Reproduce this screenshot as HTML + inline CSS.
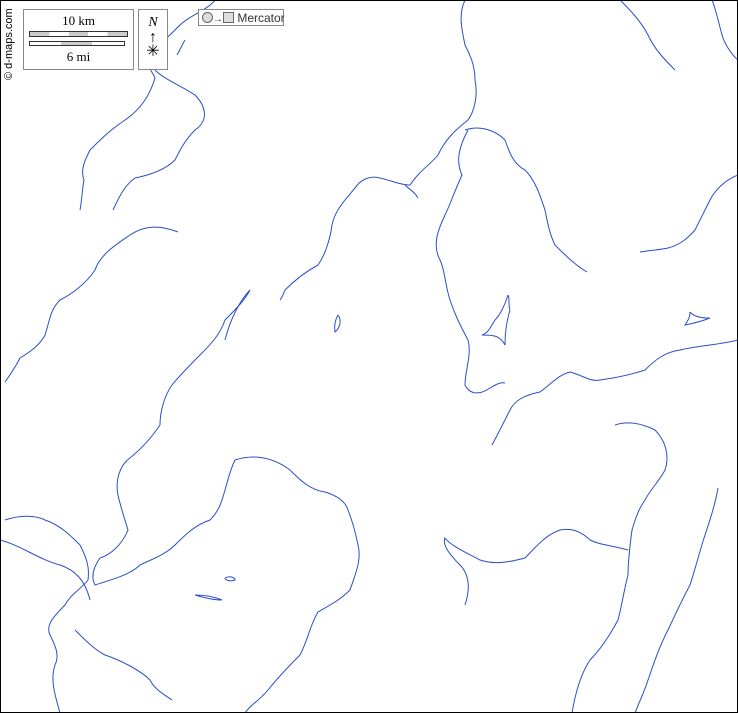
<!DOCTYPE html>
<html><head><style>
body{margin:0;width:738px;height:713px;overflow:hidden;background:#fff;position:relative;font-family:"Liberation Serif",serif}
.frame{position:absolute;left:0;top:0;width:736px;height:711px;border:1px solid #000}
svg{position:absolute;left:0;top:0}
.box{position:absolute;background:#fff;border:1px solid #888}
</style></head><body>
<svg width="738" height="713" fill="none" stroke="#2a4fc8" stroke-width="1">
<path d="M215 0 C208 10,190 15,180 25 C170 35,160 45,148 55 C142 62,152 70,155 78 C150 95,140 110,125 120 C110 130,100 140,90 150 C85 160,80 170,84 180 C82 190,82 200,80 210"/>
<path d="M155 70 C165 80,180 85,195 95 C205 105,210 120,195 130 C185 140,180 150,175 160 C165 170,150 175,135 178 C125 185,120 195,113 210"/>
<path d="M178 232 C160 225,145 225,130 235 C115 245,100 255,95 270 C85 285,70 295,60 300 C50 310,50 320,45 335 C40 345,30 352,20 358 C15 368,10 375,5 382"/>
<path d="M250 290 C245 300,235 310,225 320 C220 335,210 345,200 355 C190 365,180 375,172 385 C165 395,160 410,160 425 C150 440,140 450,130 458 C120 465,115 480,118 495 C120 505,125 520,128 530 C122 545,110 555,100 558 C95 565,90 575,95 585 C110 580,130 575,140 565 C150 560,165 555,175 545 C185 535,195 525,210 520 C220 510,222 500,225 490 C228 480,230 470,235 460 C250 455,270 455,290 470 C300 480,310 490,325 492 C335 495,345 500,348 510 C352 520,355 530,358 545 C362 560,355 575,350 590 C340 600,330 605,318 612 C310 625,308 640,300 655 C290 665,280 675,268 690 C260 700,250 705,245 713"/>
<path d="M250 290 C240 300,230 320,225 340"/>
<path d="M5 520 C20 515,35 515,45 520 C60 525,70 535,80 545 C85 555,90 565,88 580 C80 590,70 595,65 605 C55 615,45 625,50 635 C55 645,60 655,55 665 C50 680,55 695,60 713"/>
<path d="M0 540 C20 545,40 560,60 565 C75 570,85 580,90 600"/>
<path d="M75 630 C85 640,95 650,105 655 C120 660,140 670,150 680 C155 690,165 695,172 700"/>
<path d="M465 0 C458 15,462 30,465 45 C470 55,475 65,475 80 C478 95,475 110,468 120 C455 130,445 140,438 155 C430 165,420 170,410 185 C400 185,390 180,380 178 C370 175,360 180,355 188 C345 200,335 210,332 225 C330 240,325 255,318 265 C305 272,295 280,285 290 C283 295,282 298,280 300"/>
<path d="M405 185 C410 190,415 192,418 198"/>
<path d="M468 130 C460 145,455 160,462 175 C455 190,450 205,445 215 C438 230,432 245,440 260 C445 270,445 285,450 300 C455 315,460 325,468 340 C472 355,465 370,465 385 C470 395,480 395,490 388 C495 385,500 382,505 383"/>
<path d="M465 130 C480 125,495 130,505 140 C510 155,515 165,525 170 C535 180,540 195,545 210 C548 225,550 235,555 245 C565 255,575 265,587 272"/>
<path d="M620 0 C630 10,640 20,648 35 C655 50,665 60,675 70"/>
<path d="M712 0 C716 10,718 20,722 35 C725 45,732 55,738 60"/>
<path d="M738 175 C725 180,715 190,710 200 C705 210,700 220,695 230 C688 238,680 245,668 248 C660 250,650 250,640 252"/>
<path d="M738 340 C720 345,700 345,680 350 C665 352,655 360,645 370 C630 375,615 378,600 380 C590 382,582 375,570 372 C558 375,550 385,540 392 C525 395,515 400,510 410 C505 420,500 430,492 445"/>
<path d="M615 425 C630 420,645 425,655 430 C665 440,670 455,665 470 C660 480,650 490,645 500 C638 510,635 520,632 530 C630 545,628 560,628 575 C624 590,622 605,618 620 C610 635,600 650,590 660 C580 675,575 695,572 713"/>
<path d="M718 488 C715 505,710 520,705 535 C700 550,695 570,690 585 C682 600,675 615,668 630 C660 645,655 660,648 680 C645 690,640 700,635 713"/>
<path d="M628 550 C610 545,600 545,590 540 C580 530,570 528,560 530 C545 535,535 548,525 558 C510 562,495 565,480 560 C465 552,450 545,445 538 C442 545,450 555,460 565 C470 575,470 590,465 605"/>
<path d="M508 295 C505 305,500 315,495 320 C490 328,488 333,482 335 C492 335,500 335,505 345 C505 333,507 320,510 310 C508 305,510 298,508 295"/>
<path d="M690 312 C695 318,705 318,710 318 C700 322,690 324,685 325 C688 320,690 318,690 312"/>
<path d="M338 315 C335 320,334 325,335 332 C340 328,342 320,338 315"/>
<path d="M225 578 C230 575,235 578,235 580 C230 582,225 580,225 578"/>
<path d="M195 595 C205 595,215 597,222 600 C215 600,205 598,195 595"/>
<path d="M185 40 C182 45,180 50,177 55"/>
</svg>
<div class="frame"></div>
<div style="position:absolute;left:3px;top:80px;transform:rotate(-90deg);transform-origin:0 0;font:11px 'Liberation Sans',sans-serif;white-space:nowrap;line-height:13px">© d-maps.com</div>
<div class="box" style="left:23px;top:9px;width:109px;height:59px;text-align:center;font-size:13px">
<div style="margin-top:3px">10 km</div>
<div style="margin:2px 5px 0;height:4px;border:1px solid #333;background:linear-gradient(90deg,#ccc 20%,#fff 20% 40%,#ccc 40% 60%,#fff 60% 80%,#ccc 80%)"></div>
<div style="margin:4px 8px 0 5px;height:3px;border:1px solid #333;background:linear-gradient(90deg,#fff 33%,#ccc 33% 66%,#fff 66%)"></div>
<div style="margin-top:3px">6 mi</div>
</div>
<div class="box" style="left:138px;top:9px;width:28px;height:59px;text-align:center;font-size:14px;font-style:italic">
<div style="margin-top:5px">N</div>
<div style="font-size:16px;font-style:normal;line-height:14px">↑<br>✳</div>
</div>
<div class="box" style="left:198px;top:9px;width:86px;height:17px;font:12px 'Liberation Sans',sans-serif;color:#333;line-height:17px;white-space:nowrap;box-sizing:border-box;padding-left:3px">
<span style="display:inline-block;width:9px;height:9px;border:1px solid #666;border-radius:50%;background:#ddd;vertical-align:-1px"></span><span style="font-size:10px">→</span><span style="display:inline-block;width:9px;height:9px;border:1px solid #666;background:#ddd;vertical-align:-1px"></span> Mercator</div>
</body></html>
